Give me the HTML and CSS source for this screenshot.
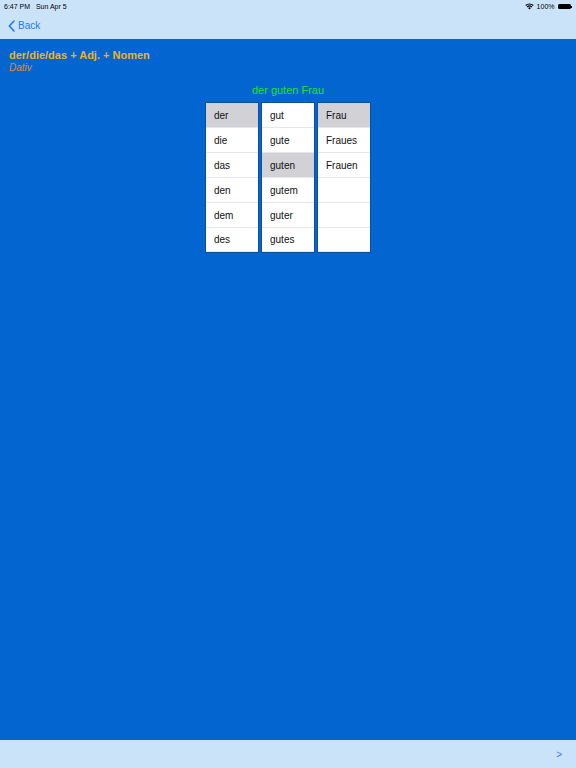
FILE: index.html
```html
<!DOCTYPE html>
<html>
<head>
<meta charset="utf-8">
<link rel="stylesheet" href="styles.css">
</head>
<body>
<div class="page">
  <header class="topbar">
    <div class="status">
      <span class="time">6:47 PM&nbsp;&nbsp;&nbsp;Sun Apr 5</span>
      <span class="status-right">
        <svg class="wifi" width="9" height="7" viewBox="0 0 18 13"><path d="M9 12.5 L6.2 9.4 A4 4 0 0 1 11.8 9.4 Z" fill="#000"/><path d="M3.4 6.6 A8 8 0 0 1 14.6 6.6 L13 8.3 A5.8 5.8 0 0 0 5 8.3 Z" fill="#000"/><path d="M0.6 3.7 A12 12 0 0 1 17.4 3.7 L15.8 5.4 A9.8 9.8 0 0 0 2.2 5.4 Z" fill="#000"/></svg>
        <span class="pct">100%</span>
        <span class="battery"><span class="cell"></span><span class="nub"></span></span>
      </span>
    </div>
    <nav class="nav">
      <a class="back">
        <svg class="chev" width="7" height="12" viewBox="0 0 7 12"><path d="M6 1 L1.3 6 L6 11" fill="none" stroke="#1b7cf2" stroke-width="1.6" stroke-linecap="round" stroke-linejoin="round"/></svg>
        <span>Back</span>
      </a>
    </nav>
  </header>
  <main class="main">
    <div class="heading">
      <div class="title">der/die/das + Adj. + Nomen</div>
      <div class="subtitle">Dativ</div>
    </div>
    <div class="phrase">der guten Frau</div>
    <div class="picker">
      <div class="col">
        <div class="row sel">der</div>
        <div class="row">die</div>
        <div class="row">das</div>
        <div class="row">den</div>
        <div class="row">dem</div>
        <div class="row">des</div>
      </div>
      <div class="col">
        <div class="row">gut</div>
        <div class="row">gute</div>
        <div class="row sel">guten</div>
        <div class="row">gutem</div>
        <div class="row">guter</div>
        <div class="row">gutes</div>
      </div>
      <div class="col">
        <div class="row sel">Frau</div>
        <div class="row">Fraues</div>
        <div class="row">Frauen</div>
        <div class="row"></div>
        <div class="row"></div>
        <div class="row"></div>
      </div>
    </div>
  </main>
  <footer class="bottombar">
    <span class="next">&gt;</span>
  </footer>
</div>
</body>
</html>
```
FILE: styles.css
```css
html, body {
  margin: 0;
  padding: 0;
}
body {
  font-family: "Liberation Sans", Arial, sans-serif;
}
.page {
  width: 576px;
  height: 768px;
  display: flex;
  flex-direction: column;
  background: #0366d0;
}
.topbar {
  background: #cbe3f8;
  height: 39px;
  border-bottom: 1px solid #1f5fa8;
  display: flex;
  flex-direction: column;
}
.status {
  height: 13px;
  display: flex;
  justify-content: space-between;
  align-items: center;
  padding: 0 4px 0 4px;
  font-size: 7px;
  color: #000;
}
.status-right {
  display: flex;
  align-items: center;
  gap: 3px;
}
.wifi {
  display: block;
}
.battery {
  display: flex;
  align-items: center;
}
.cell {
  width: 13px;
  height: 5px;
  background: #000;
  border-radius: 1.5px;
}
.nub {
  width: 1px;
  height: 2px;
  background: #000;
  margin-left: 0.5px;
}
.nav {
  flex: 1;
  display: flex;
  align-items: center;
  padding-left: 8px;
  padding-bottom: 1px;
}
.back {
  display: flex;
  align-items: center;
  gap: 3px;
  color: #1b7cf2;
  font-size: 10px;
}
.chev {
  display: block;
}
.main {
  flex: 1;
  padding-top: 9px;
  display: flex;
  flex-direction: column;
}
.heading {
  padding-left: 9px;
}
.title {
  font-weight: bold;
  font-size: 11px;
  line-height: 12px;
  color: #eeb122;
}
.subtitle {
  font-style: italic;
  font-size: 10px;
  line-height: 13px;
  color: #e0892c;
}
.phrase {
  text-align: center;
  color: #21e21f;
  font-size: 11px;
  line-height: 14px;
  margin-top: 9px;
}
.picker {
  display: flex;
  justify-content: center;
  gap: 2px;
  margin-top: 5px;
}
.col {
  width: 52px;
  background: #fff;
  border: 1px solid #0c4f9c;
  display: flex;
  flex-direction: column;
}
.row {
  height: 24px;
  border-bottom: 1px solid #e6e6ea;
  padding-left: 8px;
  font-size: 10px;
  color: #111;
  display: flex;
  align-items: center;
  background-image: linear-gradient(#fff, #fff);
  background-size: 8px 1px;
  background-repeat: no-repeat;
  background-position: left bottom;
}
.row:last-child {
  height: 23px;
}
.row.sel {
  background: #d1d1d6;
}
.bottombar {
  height: 28px;
  background: #cbe3f8;
  border-top: 1px solid #1f5fa8;
  display: flex;
  align-items: center;
  justify-content: flex-end;
  padding-right: 14px;
}
.next {
  color: #3a7ef0;
  font-size: 10px;
}
```
